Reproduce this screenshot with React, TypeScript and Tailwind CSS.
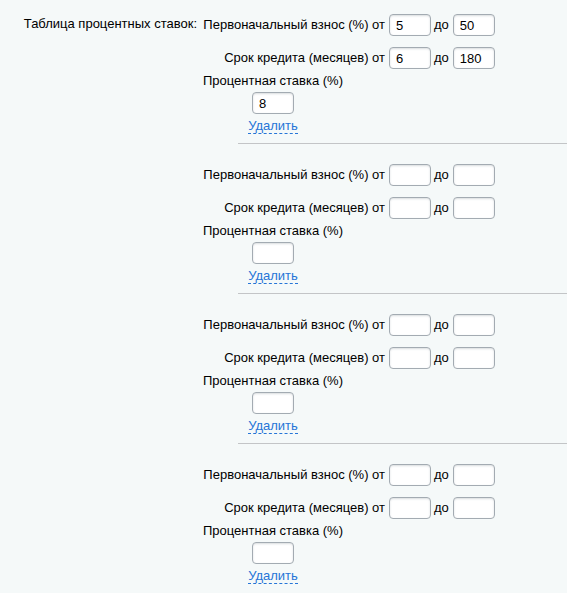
import React from 'react';

interface RateBlock {
  downFrom: string;
  downTo: string;
  termFrom: string;
  termTo: string;
  rate: string;
}

const blocks: RateBlock[] = [
  { downFrom: '5', downTo: '50', termFrom: '6', termTo: '180', rate: '8' },
  { downFrom: '', downTo: '', termFrom: '', termTo: '', rate: '' },
  { downFrom: '', downTo: '', termFrom: '', termTo: '', rate: '' },
  { downFrom: '', downTo: '', termFrom: '', termTo: '', rate: '' },
];

const Field: React.FC<{ value: string }> = ({ value }) => (
  <input
    type="text"
    defaultValue={value}
    className="w-[42px] h-[22px] px-[6px] bg-white border border-[#a3abb2] rounded-[4px] shadow-[inset_0_1px_2px_rgba(180,188,191,0.5)] text-[13px] text-black outline-none"
  />
);

const RangeRow: React.FC<{ label: string; from: string; to: string }> = ({ label, from, to }) => (
  <div className="flex items-center h-[22px]">
    <span className="w-[186px] pr-[4px] text-right whitespace-nowrap">{label}</span>
    <Field value={from} />
    <span className="ml-[3px] mr-[4px]">до</span>
    <Field value={to} />
  </div>
);

const Block: React.FC<{ block: RateBlock; first: boolean; last: boolean }> = ({ block, first, last }) => (
  <div className={first ? '' : 'pt-[20px]'}>
    <RangeRow label="Первоначальный взнос (%) от" from={block.downFrom} to={block.downTo} />
    <div className="mt-[11px]">
      <RangeRow label="Срок кредита (месяцев) от" from={block.termFrom} to={block.termTo} />
    </div>
    <div className="mt-[4px] w-fit flex flex-col items-center">
      <span className="leading-[16px]">Процентная ставка (%)</span>
      <div className="mt-[3px]">
        <Field value={block.rate} />
      </div>
      <a
        href="#"
        className="mt-[5px] leading-[14px] text-[#2675d7] border-b border-dashed border-[#2675d7] no-underline"
      >
        Удалить
      </a>
    </div>
    {!last && <div className="mt-[9px] ml-[35px] h-px bg-[#c3c5c7]" />}
  </div>
);

export default function App() {
  return (
    <div className="min-h-screen bg-[#f5f9f9] font-['Liberation_Sans',Arial,sans-serif] text-[13px] text-black">
      <div className="flex">
        <div className="w-[200px] shrink-0 pr-[3px] pt-[16px] text-right leading-[16px] whitespace-nowrap">
          Таблица процентных ставок:
        </div>
        <div className="flex-1 pl-[3px] pt-[14px]">
          {blocks.map((b, i) => (
            <Block key={i} block={b} first={i === 0} last={i === blocks.length - 1} />
          ))}
        </div>
      </div>
    </div>
  );
}
